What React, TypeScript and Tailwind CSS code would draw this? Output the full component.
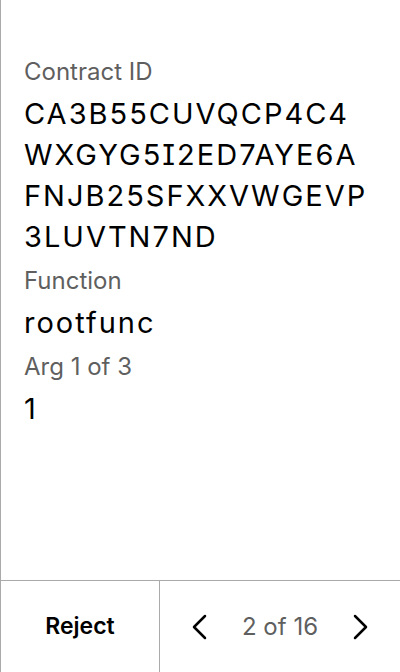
import React from 'react';

const fields = [
  { label: 'Contract ID', value: 'CA3B55CUVQCP4C4WXGYG5I2ED7AYE6AFNJB25SFXXVWGEVP3LUVTN7ND' },
  { label: 'Function', value: 'rootfunc' },
  { label: 'Arg 1 of 3', value: '1' },
];

const Chevron: React.FC<{ dir: 'left' | 'right' }> = ({ dir }) => (
  <svg width="16" height="26" viewBox="0 0 16 26" fill="none">
    <path
      d={dir === 'left' ? 'M14 2L3 13L14 24' : 'M2 2L13 13L2 24'}
      stroke="black"
      strokeWidth="2.5"
      strokeLinecap="round"
      strokeLinejoin="round"
    />
  </svg>
);

export default function App() {
  return (
    <div
      className="h-[672px] w-[400px] flex flex-col bg-white border-l border-[#aaaaaa]"
      style={{ fontFamily: 'Inter, "Noto Sans", sans-serif' }}
    >
      <div className="flex-1 pl-[23px] pr-6 pt-[56px]">
        {fields.map((f) => (
          <div key={f.label} className="mb-[8px]">
            <div className="text-[24px] leading-[32px] text-[#5f5f5f]">{f.label}</div>
            <div className="text-[29px] leading-[41px] tracking-[2px] text-black break-all mt-[5px] [font-feature-settings:'cv08']">
              {f.value}
            </div>
          </div>
        ))}
      </div>
      <div className="h-[92px] flex border-t border-[#aaaaaa]">
        <button className="w-[159px] flex items-center justify-center text-[23px] font-semibold text-black border-r border-[#aaaaaa]">
          Reject
        </button>
        <div className="flex-1 flex items-center justify-between pl-[31px] pr-[31px]">
          <Chevron dir="left" />
          <span className="text-[24px] text-[#5f5f5f]">2 of 16</span>
          <Chevron dir="right" />
        </div>
      </div>
    </div>
  );
}
